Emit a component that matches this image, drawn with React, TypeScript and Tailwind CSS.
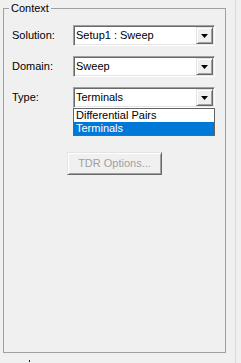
const font = "font-['Tahoma','Liberation_Sans','DejaVu_Sans',sans-serif]";

const sunkenClass =
  "flex h-[21px] w-[142px] items-center border-t border-l border-t-[#a0a0a0] border-l-[#a0a0a0] border-r border-b border-r-white border-b-white bg-white shadow-[inset_1px_1px_0_#696969,inset_-1px_-1px_0_#e3e3e3]";

const raisedClass =
  "border-t border-l border-t-[#e3e3e3] border-l-[#e3e3e3] border-r border-b border-r-[#696969] border-b-[#696969] bg-[#f0f0f0] shadow-[inset_1px_1px_0_#ffffff,inset_-1px_-1px_0_#a0a0a0]";

function Arrow() {
  return (
    <svg width="7" height="4" viewBox="0 0 7 4" className="block">
      <path d="M0 0H7L3.5 4Z" fill="#000" />
    </svg>
  );
}

function Combo({ value }: { value: string }) {
  return (
    <div className={sunkenClass}>
      <span className="flex-1 truncate pl-[2px] text-[11px] leading-[13px] text-black">{value}</span>
      <div className={`mr-[1px] flex h-[17px] w-[17px] items-center justify-center ${raisedClass}`}>
        <Arrow />
      </div>
    </div>
  );
}

function Row({ label, value }: { label: string; value: string }) {
  return (
    <div className="flex items-center">
      <span className="w-[61px] text-[11px] leading-[13px] text-black">{label}</span>
      <Combo value={value} />
    </div>
  );
}

export default function App() {
  return (
    <div className={`flex h-[363px] w-[241px] overflow-hidden bg-[#f0f0f0] ${font}`}>
      <div className="w-[235px] pl-[3px] pt-[2px]">
        <fieldset className="h-[351px] w-[223px] border border-[#a0a0a0] pl-[8px]">
          <legend className="ml-[-3px] px-[2px] text-[11px] leading-[13px] text-black">Context</legend>
          <div className="mt-[10px] flex flex-col gap-[10px]">
            <Row label="Solution:" value="Setup1 : Sweep" />
            <Row label="Domain:" value="Sweep" />
            <div>
              <Row label="Type:" value="Terminals" />
              <div className="ml-[61px] w-[142px] border border-[#646464] bg-white text-[11px]">
                <div className="h-[13px] pl-[2px] leading-[13px] text-black">Differential Pairs</div>
                <div className="h-[13px] bg-[#0078d7] pl-[2px] leading-[13px] text-white">Terminals</div>
              </div>
            </div>
          </div>
          <div className="ml-[55px] mt-[16px]">
            <div className={`flex h-[23px] w-[95px] items-center justify-center text-[11px] text-[#a0a0a0] ${raisedClass}`}>
              TDR Options...
            </div>
          </div>
        </fieldset>
        <div className="ml-[26px] mt-[7px] h-[2px] w-[1px] bg-[#1a1a1a]" />
      </div>
      <div className="h-full w-[6px] border-l border-l-[#dadada]" />
    </div>
  );
}
